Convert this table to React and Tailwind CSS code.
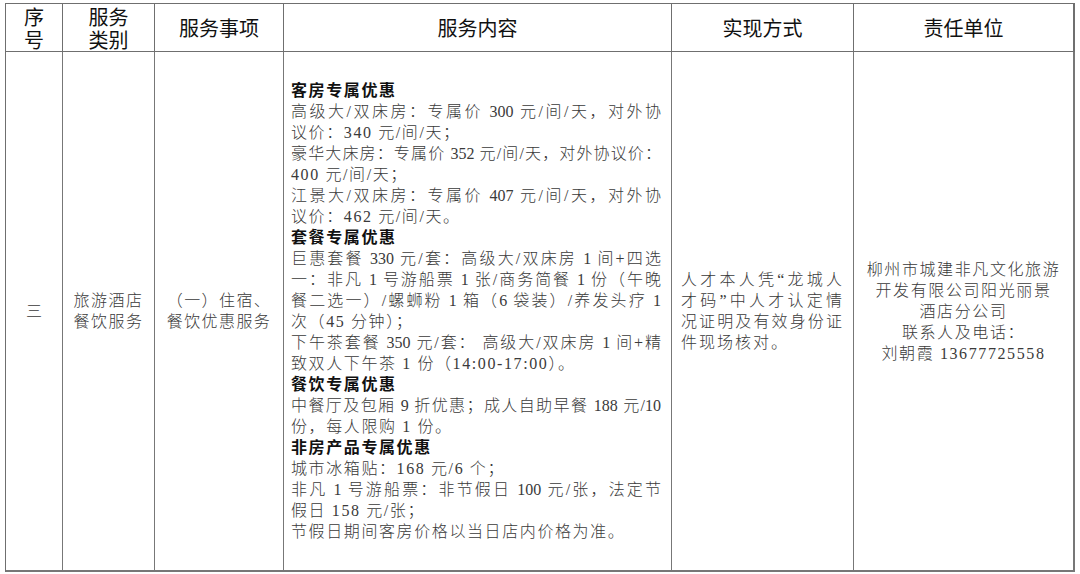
const lines = [
  { t: '客房专属优惠', b: true },
  { t: '高级大/双床房：专属价 300 元/间/天，对外协', j: true },
  { t: '议价：340 元/间/天；' },
  { t: '豪华大床房：专属价 352 元/间/天，对外协议价：', j: true },
  { t: '400 元/间/天；' },
  { t: '江景大/双床房：专属价 407 元/间/天，对外协', j: true },
  { t: '议价：462 元/间/天。' },
  { t: '套餐专属优惠', b: true },
  { t: '巨惠套餐 330 元/套：高级大/双床房 1 间+四选', j: true },
  { t: '一：非凡 1 号游船票 1 张/商务简餐 1 份（午晚', j: true },
  { t: '餐二选一）/螺蛳粉 1 箱（6 袋装）/养发头疗 1', j: true },
  { t: '次（45 分钟）；' },
  { t: '下午茶套餐 350 元/套： 高级大/双床房 1 间+精', j: true },
  { t: '致双人下午茶 1 份（14:00-17:00）。' },
  { t: '餐饮专属优惠', b: true },
  { t: '中餐厅及包厢 9 折优惠；成人自助早餐 188 元/10', j: true },
  { t: '份，每人限购 1 份。' },
  { t: '非房产品专属优惠', b: true },
  { t: '城市冰箱贴：168 元/6 个；' },
  { t: '非凡 1 号游船票：非节假日 100 元/张，法定节', j: true },
  { t: '假日 158 元/张；' },
  { t: '节假日期间客房价格以当日店内价格为准。' },
];

const head = "flex flex-col items-center justify-center border-r border-b border-[#6f6f6f] text-[20px] leading-[23px] text-[#111] font-['Noto_Sans_CJK_SC',sans-serif]";
const cell = "flex flex-col justify-center border-r border-b-2 border-[#777] text-[16px] leading-[21px] text-[#3a3a3a] font-light font-['Liberation_Serif','Noto_Sans_CJK_SC',serif]";

export default function App() {
  return (
    <div className="h-[574px] w-[1080px] bg-white pl-[5px] pt-[3px]">
      <div className="grid w-[1070px] grid-cols-[57px_92px_129px_388px_182px_221px] grid-rows-[48px_520px] border-l border-t border-[#6f6f6f]">
        <div className={head}>
          <span>序</span>
          <span>号</span>
        </div>
        <div className={head}>
          <span>服务</span>
          <span>类别</span>
        </div>
        <div className={head}>服务事项</div>
        <div className={head}>服务内容</div>
        <div className={head}>实现方式</div>
        <div className={`${head} border-r-2`}>责任单位</div>

        <div className={`${cell} items-center`}>三</div>
        <div className={`${cell} items-center tracking-[1.5px]`}>
          <span>旅游酒店</span>
          <span>餐饮服务</span>
        </div>
        <div className={`${cell} items-center tracking-[1.4px]`}>
          <span>（一）住宿、</span>
          <span>餐饮优惠服务</span>
        </div>
        <div className={`${cell} pl-[7px] pr-[10px] tracking-[1.6px]`}>
          {lines.map((l, i) => (
            <div
              key={i}
              className={
                (l.b ? 'font-bold text-[#111] tracking-[1.6px] ' : '') +
                (l.j ? 'text-justify tracking-normal [text-align-last:justify]' : '')
              }
            >
              {l.t}
            </div>
          ))}
        </div>
        <div className={`${cell} pl-[9px] pr-[11px]`}>
          <div className="text-justify [text-align-last:justify]">人才本人凭“龙城人</div>
          <div className="text-justify [text-align-last:justify]">才码”中人才认定情</div>
          <div className="text-justify [text-align-last:justify]">况证明及有效身份证</div>
          <div className="tracking-[2px]">件现场核对。</div>
        </div>
        <div className={`${cell} items-center border-r-2 tracking-[1.6px]`}>
          <span>柳州市城建非凡文化旅游</span>
          <span>开发有限公司阳光丽景</span>
          <span>酒店分公司</span>
          <span>联系人及电话：</span>
          <span>刘朝霞 13677725558</span>
        </div>
      </div>
    </div>
  );
}
